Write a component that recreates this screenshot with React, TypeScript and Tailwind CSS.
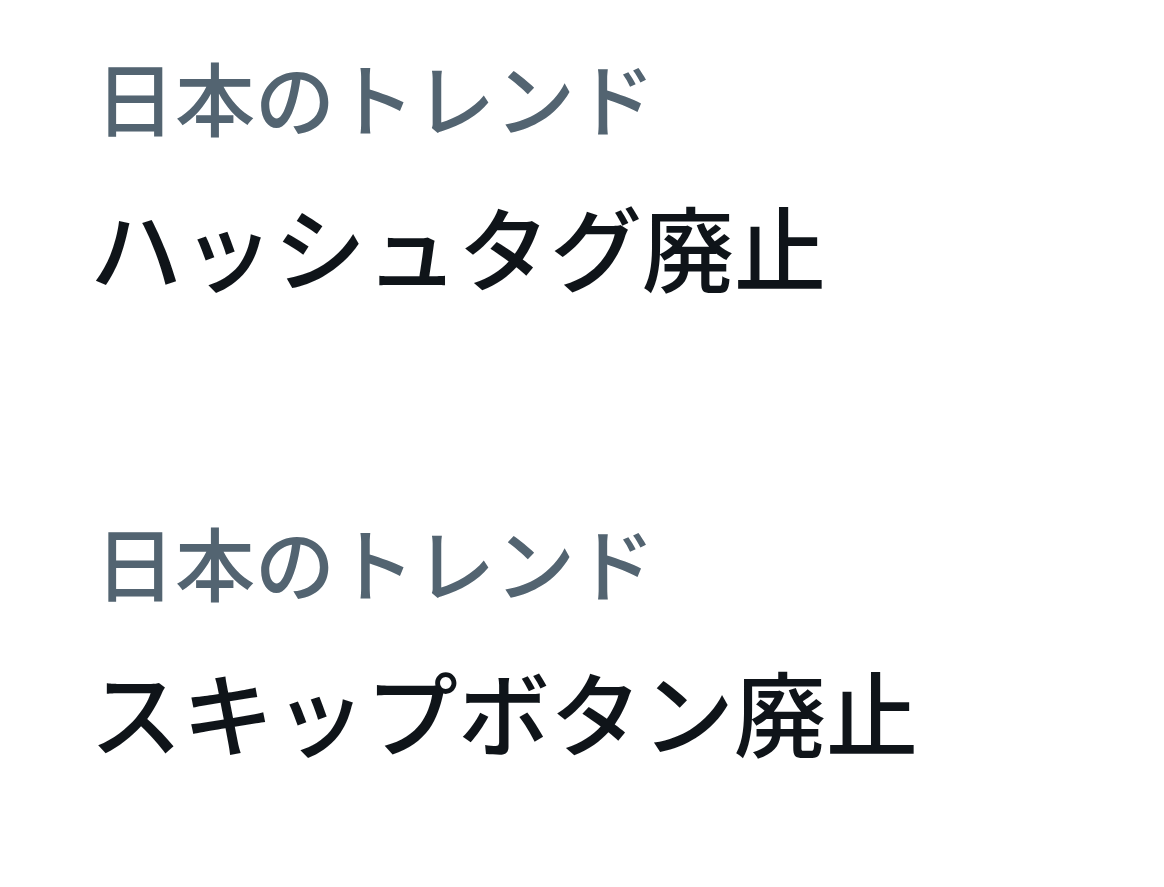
const trends = [
  { context: "日本のトレンド", title: "ハッシュタグ廃止" },
  { context: "日本のトレンド", title: "スキップボタン廃止" },
];

function TrendItem({ context, title }: { context: string; title: string }) {
  return (
    <div className="flex flex-col pt-[47px] pb-[160px] pl-[95px] pr-6">
      <span className="text-[80px] leading-[96px] font-medium text-[#536471]">{context}</span>
      <span className="mt-[42px] -ml-[5px] text-[92px] leading-[120px] font-medium text-[#0f1419]">
        {title}
      </span>
    </div>
  );
}

export default function App() {
  return (
    <div
      className="min-h-screen w-full bg-white overflow-hidden"
      style={{ fontFamily: '"Noto Sans CJK JP", "Noto Sans", sans-serif' }}
    >
      {trends.map((t, i) => (
        <TrendItem key={i} context={t.context} title={t.title} />
      ))}
    </div>
  );
}
